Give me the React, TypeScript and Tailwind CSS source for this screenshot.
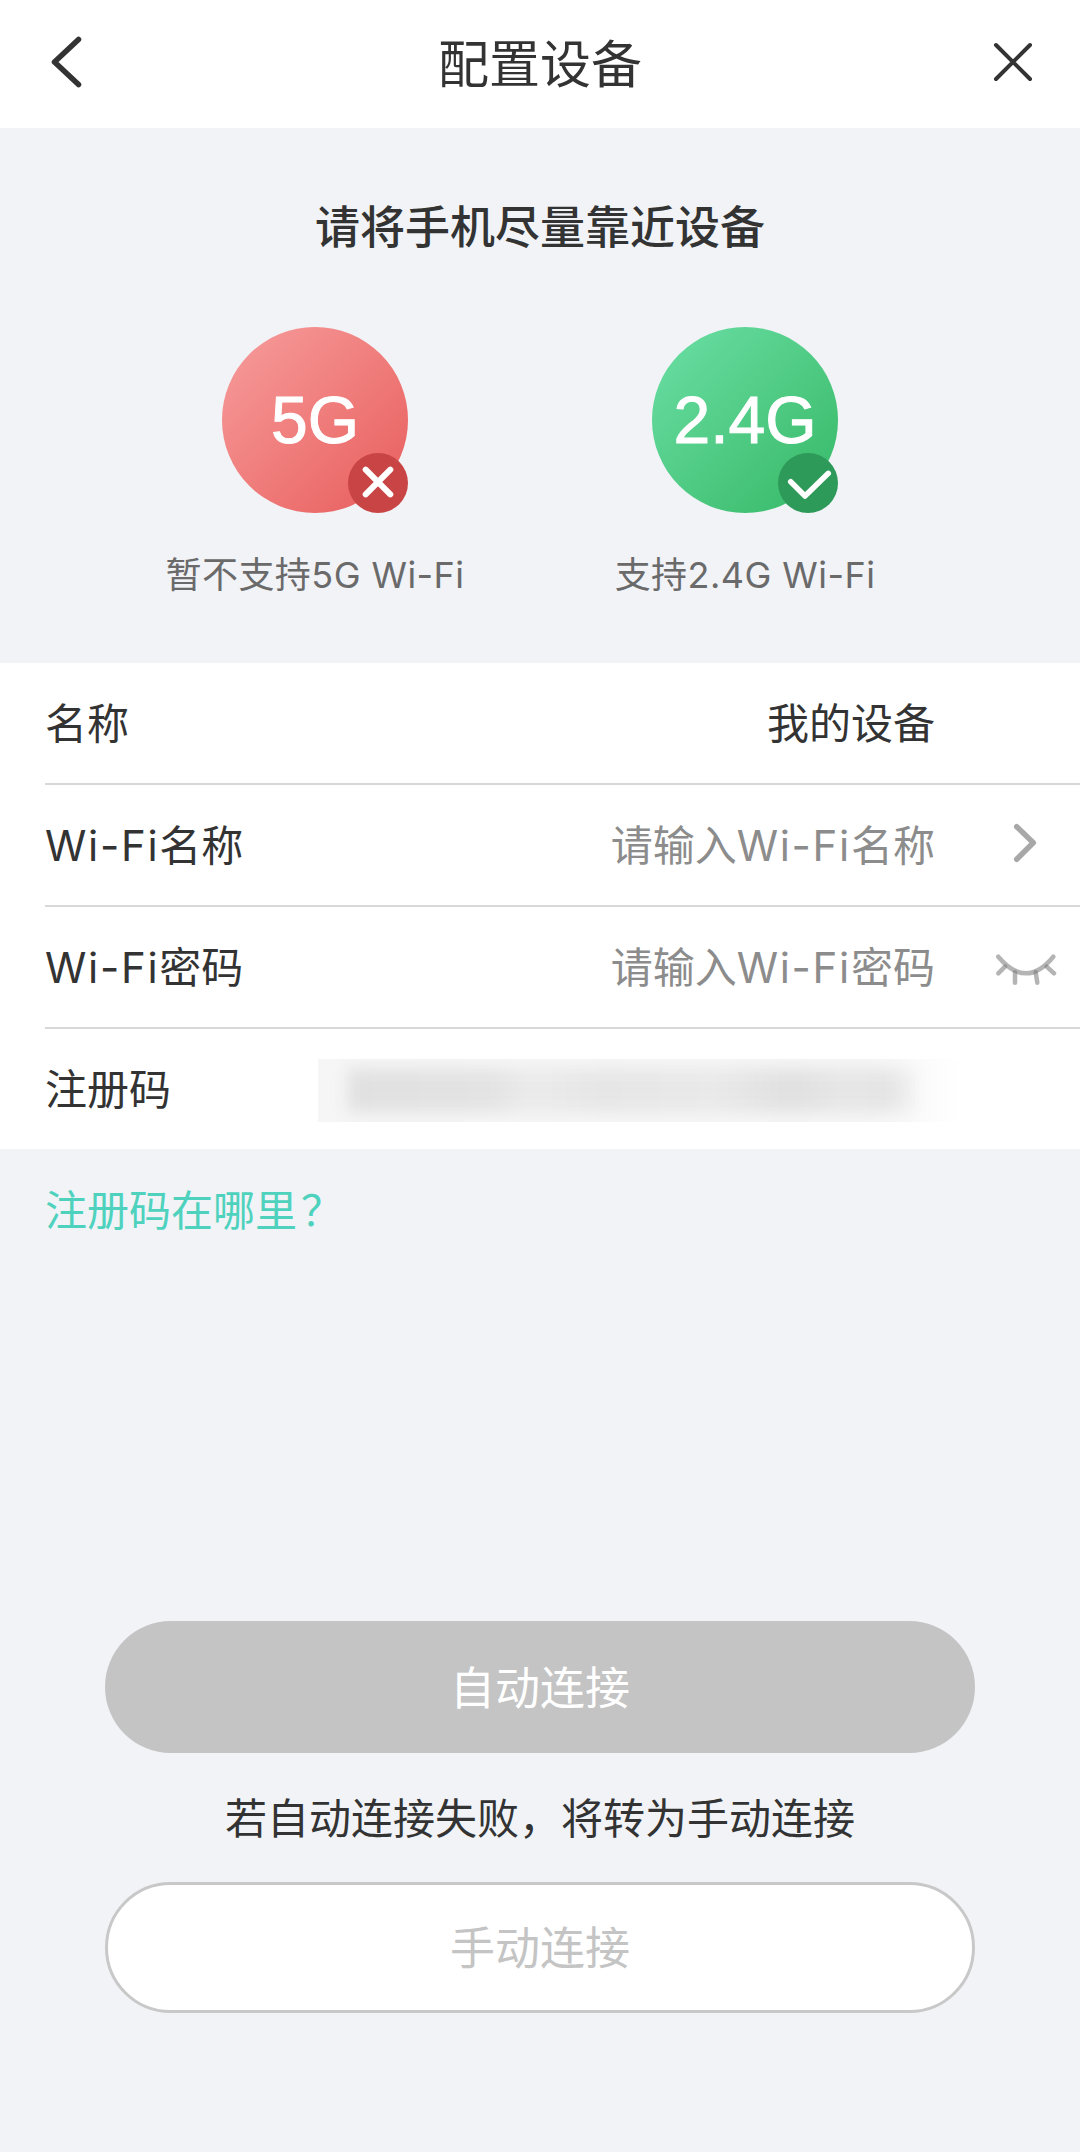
import React from "react";

function Back() {
  return (
    <svg width="46" height="60" viewBox="0 0 46 60" fill="none" stroke="#333333" strokeWidth="5.500" strokeLinecap="round" strokeLinejoin="round">
      <path d="M33.500 5.500 L9.500 28 L33.500 50.500" />
    </svg>
  );
}

function Close() {
  return (
    <svg width="46" height="46" viewBox="0 0 46 46" fill="none" stroke="#333333" strokeWidth="4" strokeLinecap="round">
      <path d="M7 4 L41 38 M41 4 L7 38" />
    </svg>
  );
}

function Chevron() {
  return (
    <svg className="mb-[4px]" width="26" height="42" viewBox="0 0 26 42" fill="none" stroke="#a8a8a8" strokeWidth="5.500" strokeLinecap="round" strokeLinejoin="round">
      <path d="M4.700 4.700 L21.300 20.700 L4.700 37.300" />
    </svg>
  );
}

function EyeClosed() {
  return (
    <svg className="mt-[4px]" width="62" height="34" viewBox="0 0 62 34" fill="none" stroke="#777777" strokeWidth="4.500" strokeLinecap="round" strokeOpacity="0.55">
      <path d="M3.300 4.700 Q31 38 58.300 4.700" />
      <path d="M10 14.700 L3.300 21.300" />
      <path d="M20 20.300 L20 30.700" />
      <path d="M40.700 20.300 L42.300 30.700" />
      <path d="M51.700 14.700 L59 21.300" />
    </svg>
  );
}

function WiFi() {
  return <span className="tracking-[1.7px]">Wi-Fi</span>;
}

function Band({ label, note, circle, badge, icon }: { label: string; note: React.ReactNode; circle: string; badge: string; icon: React.ReactNode }) {
  return (
    <div className="flex w-[430px] flex-col items-center">
      <div className={`relative flex h-[186px] w-[186px] items-center justify-center rounded-full ${circle}`}>
        <span className="font-['Liberation_Sans',sans-serif] text-[66px] leading-none text-white [-webkit-text-stroke:1px_white]">{label}</span>
        <div className={`absolute right-0 bottom-0 h-[60px] w-[60px] rounded-full ${badge}`}>{icon}</div>
      </div>
      <div className="mt-[37px] h-[50px] text-[36px] leading-[50px] tracking-[0.45px] whitespace-nowrap text-[#6a6a6a]">{note}</div>
    </div>
  );
}

function Row({ label, value, valueClass, slot }: { label: React.ReactNode; value: React.ReactNode; valueClass: string; slot?: React.ReactNode }) {
  return (
    <div className="ml-[45px] box-content flex h-[120px] items-center border-b-2 border-[#d8d8d8]">
      <span className="text-[42px] text-[#333333]">{label}</span>
      <span className="flex-1" />
      <span className={`text-[42px] whitespace-nowrap ${valueClass}`}>{value}</span>
      <div className="flex w-[145px] items-center">{slot}</div>
    </div>
  );
}

export default function App() {
  return (
    <div className="flex min-h-[2152px] w-[1080px] flex-col bg-[#f1f3f7] font-['Inter','Noto_Sans_CJK_SC',sans-serif]">
      <header className="flex h-[128px] items-center justify-between bg-white px-[45px]">
        <Back />
        <h1 className="text-[51px] leading-none font-normal text-[#333333]">配置设备</h1>
        <Close />
      </header>

      <div className="pt-[65px] pb-[63px]">
        <h2 className="h-[70px] text-center text-[45px] leading-[70px] font-medium text-[#333333]">请将手机尽量靠近设备</h2>
        <div className="mt-[64px] ml-[100px] flex">
          <Band
            label="5G"
            note="暂不支持5G Wi-Fi"
            circle="bg-gradient-to-br from-[#f69d9d] to-[#e75b5b]"
            badge="bg-[#c94545]"
            icon={
              <svg width="60" height="60" viewBox="0 0 60 60" fill="none" stroke="#ffffff" strokeWidth="6" strokeLinecap="round">
                <path d="M17.700 16.700 L42.300 41.300 M42.300 16.700 L17.700 41.300" />
              </svg>
            }
          />
          <Band
            label="2.4G"
            note="支持2.4G Wi-Fi"
            circle="bg-gradient-to-br from-[#6bdfa5] to-[#33b865]"
            badge="bg-[#2e9a5a]"
            icon={
              <svg width="60" height="60" viewBox="0 0 60 60" fill="none" stroke="#ffffff" strokeWidth="5.500" strokeLinecap="round" strokeLinejoin="round">
                <path d="M12.700 28.700 L27 43 L50.300 20.300" />
              </svg>
            }
          />
        </div>
      </div>

      <section className="bg-white">
        <Row label="名称" value="我的设备" valueClass="text-[#333333]" />
        <Row
          label={<><WiFi />名称</>}
          value={<>请输入<WiFi />名称</>}
          valueClass="text-[#8c8c8c]"
          slot={<div className="flex pl-[77px]"><Chevron /></div>}
        />
        <Row
          label={<><WiFi />密码</>}
          value={<>请输入<WiFi />密码</>}
          valueClass="text-[#8c8c8c]"
          slot={<div className="flex pl-[60px]"><EyeClosed /></div>}
        />
        <div className="ml-[45px] flex h-[120px] items-center">
          <span className="w-[273px] text-[42px] text-[#333333]">注册码</span>
          <div className="mt-[3px] h-[63px] w-[645px] overflow-hidden bg-gradient-to-r from-[#f6f6f6] via-[#f6f6f6] via-85% to-white py-[10px] pr-[48px] pl-[30px]">
            <div className="h-[43px] bg-[linear-gradient(90deg,#e0e0e0_0%,#e3e3e3_25%,#ebebeb_32%,#e6e6e6_45%,#e9e9e9_65%,#e0e0e0_78%,#e7e7e7_88%,#e4e4e4_95%,#f2f2f2_100%)] blur-[8px]" />
          </div>
        </div>
      </section>

      <a className="mt-[37px] ml-[45px] h-[50px] text-[42px] leading-[50px] text-[#4fd2bd]">
        注册码在哪里<span className="ml-[4px]">？</span>
      </a>

      <button className="mt-[385px] ml-[105px] flex h-[132px] w-[870px] items-center justify-center rounded-full bg-[#c4c4c4] pt-[3px] text-[45px] text-white">
        自动连接
      </button>
      <p className="mt-[41px] h-[50px] text-center text-[42px] leading-[50px] text-[#333333]">若自动连接失败，将转为手动连接</p>
      <button className="mt-[38px] ml-[105px] flex h-[131px] w-[870px] items-center justify-center rounded-full border-[3px] border-[#c8c8c8] bg-white pt-[3px] text-[45px] text-[#c4c4c4]">
        手动连接
      </button>
    </div>
  );
}
